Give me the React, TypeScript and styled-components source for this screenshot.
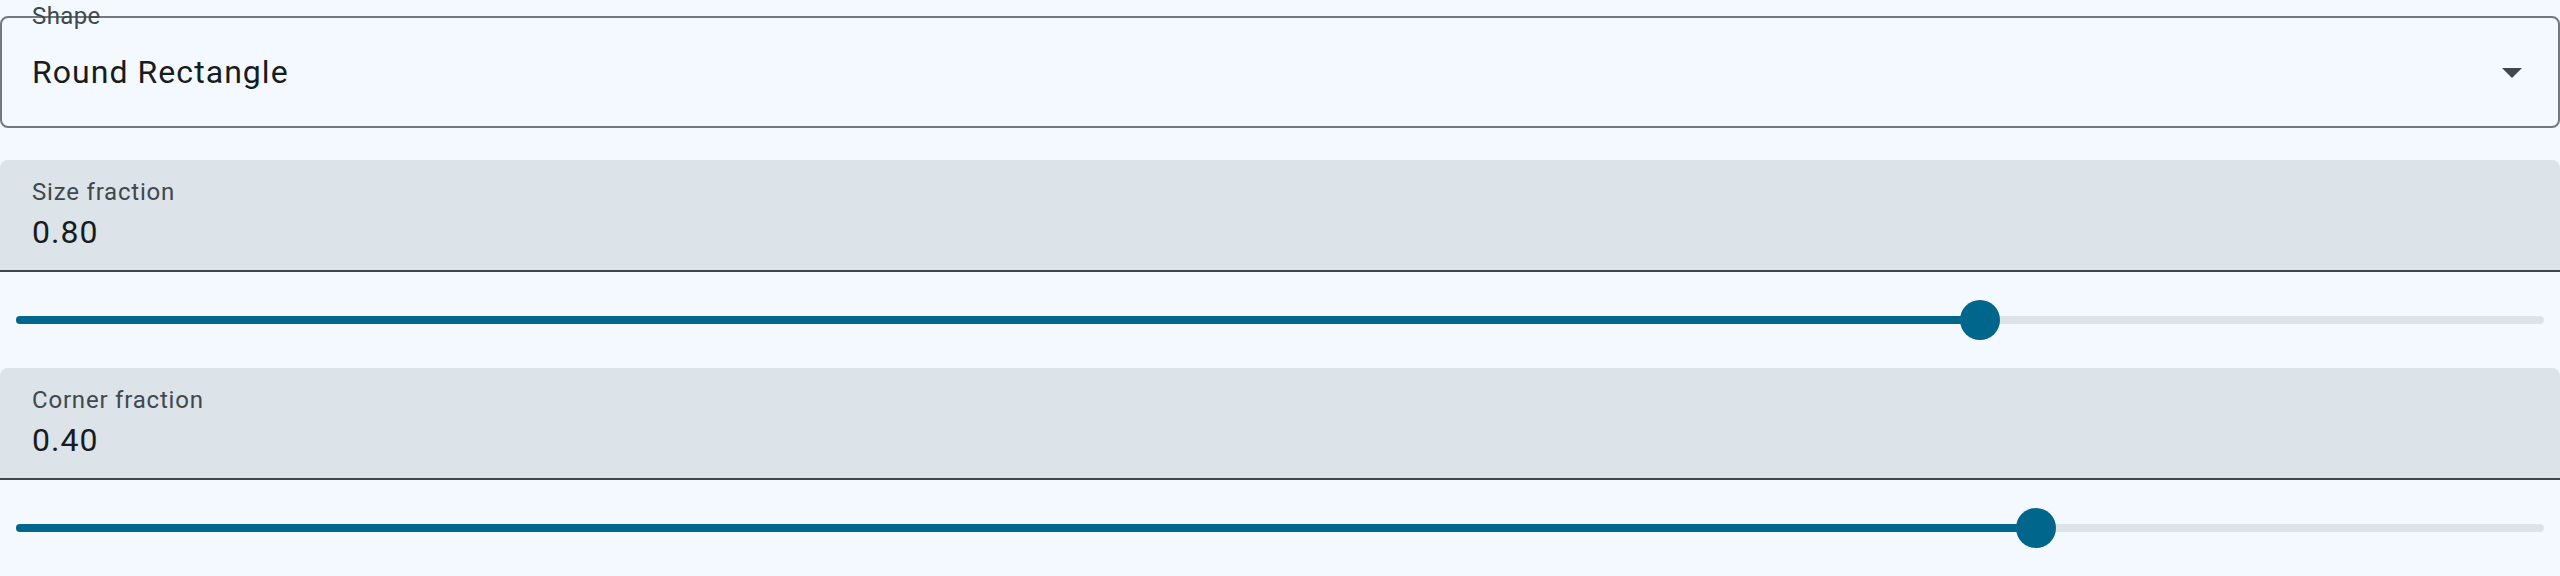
import React from "react";
import styled, { createGlobalStyle } from "styled-components";

const GlobalStyle = createGlobalStyle`
  html, body {
    margin: 0;
    padding: 0;
    background: #f3f9fe;
  }
  body {
    font-family: Roboto, "Noto Sans", sans-serif;
    color: #171c20;
  }
`;

const Page = styled.div`
  width: 2560px;
  height: 576px;
  display: flex;
  flex-direction: column;
  background: #f3f9fe;
  overflow: hidden;
`;

const SelectWrap = styled.div`
  position: relative;
  padding-top: 16px;
  margin-bottom: 32px;
`;

const SelectBox = styled.div`
  height: 112px;
  box-sizing: border-box;
  border: 2px solid #71787e;
  border-radius: 8px;
  display: flex;
  align-items: center;
  padding: 0 22px 0 30px;
`;

const SelectLabel = styled.span`
  position: absolute;
  left: 32px;
  top: 4px;
  font-size: 24px;
  line-height: 24px;
  color: #41484d;
  letter-spacing: 0.4px;
`;

const SelectValue = styled.span`
  flex: 1;
  font-size: 32px;
  line-height: 48px;
  letter-spacing: 1.05px;
  color: #171c20;
`;

const ArrowIcon = styled.svg`
  width: 48px;
  height: 48px;
  fill: #41484d;
  flex: none;
`;

const Field = styled.div`
  height: 112px;
  box-sizing: border-box;
  background: #dce3e9;
  border-radius: 8px 8px 0 0;
  border-bottom: 2px solid #41484d;
  padding: 16px 32px 0;
  display: flex;
  flex-direction: column;
`;

const FieldLabel = styled.span`
  font-size: 24px;
  line-height: 32px;
  letter-spacing: 0.8px;
  color: #41484d;
`;

const FieldValue = styled.span`
  font-size: 32px;
  line-height: 48px;
  letter-spacing: 1px;
  color: #171c20;
`;

const SliderRow = styled.div`
  height: 96px;
  padding: 0 16px;
  display: flex;
  align-items: center;
`;

const Track = styled.div`
  position: relative;
  flex: 1;
  height: 8px;
  border-radius: 4px;
  background: #dce3e9;
`;

const ActiveTrack = styled.div`
  height: 100%;
  border-radius: 4px 0 0 4px;
  background: #00668b;
`;

const Thumb = styled.div`
  position: absolute;
  top: 50%;
  width: 40px;
  height: 40px;
  margin: -20px 0 0 -20px;
  border-radius: 50%;
  background: #00668b;
`;

type SliderProps = { pos: number };

const Slider: React.FC<SliderProps> = ({ pos }) => (
  <SliderRow>
    <Track>
      <ActiveTrack style={{ width: `${pos * 100}%` }} />
      <Thumb style={{ left: `${pos * 100}%` }} />
    </Track>
  </SliderRow>
);

type NumFieldProps = { label: string; value: string };

const NumField: React.FC<NumFieldProps> = ({ label, value }) => (
  <Field>
    <FieldLabel>{label}</FieldLabel>
    <FieldValue>{value}</FieldValue>
  </Field>
);

export default function App() {
  return (
    <>
      <GlobalStyle />
      <Page>
        <SelectWrap>
          <SelectBox>
            <SelectValue>Round Rectangle</SelectValue>
            <ArrowIcon viewBox="0 0 24 24">
              <path d="M7 10l5 5 5-5z" />
            </ArrowIcon>
          </SelectBox>
          <SelectLabel>Shape</SelectLabel>
        </SelectWrap>
        <NumField label="Size fraction" value="0.80" />
        <Slider pos={1964 / 2528} />
        <NumField label="Corner fraction" value="0.40" />
        <Slider pos={2020 / 2528} />
      </Page>
    </>
  );
}
